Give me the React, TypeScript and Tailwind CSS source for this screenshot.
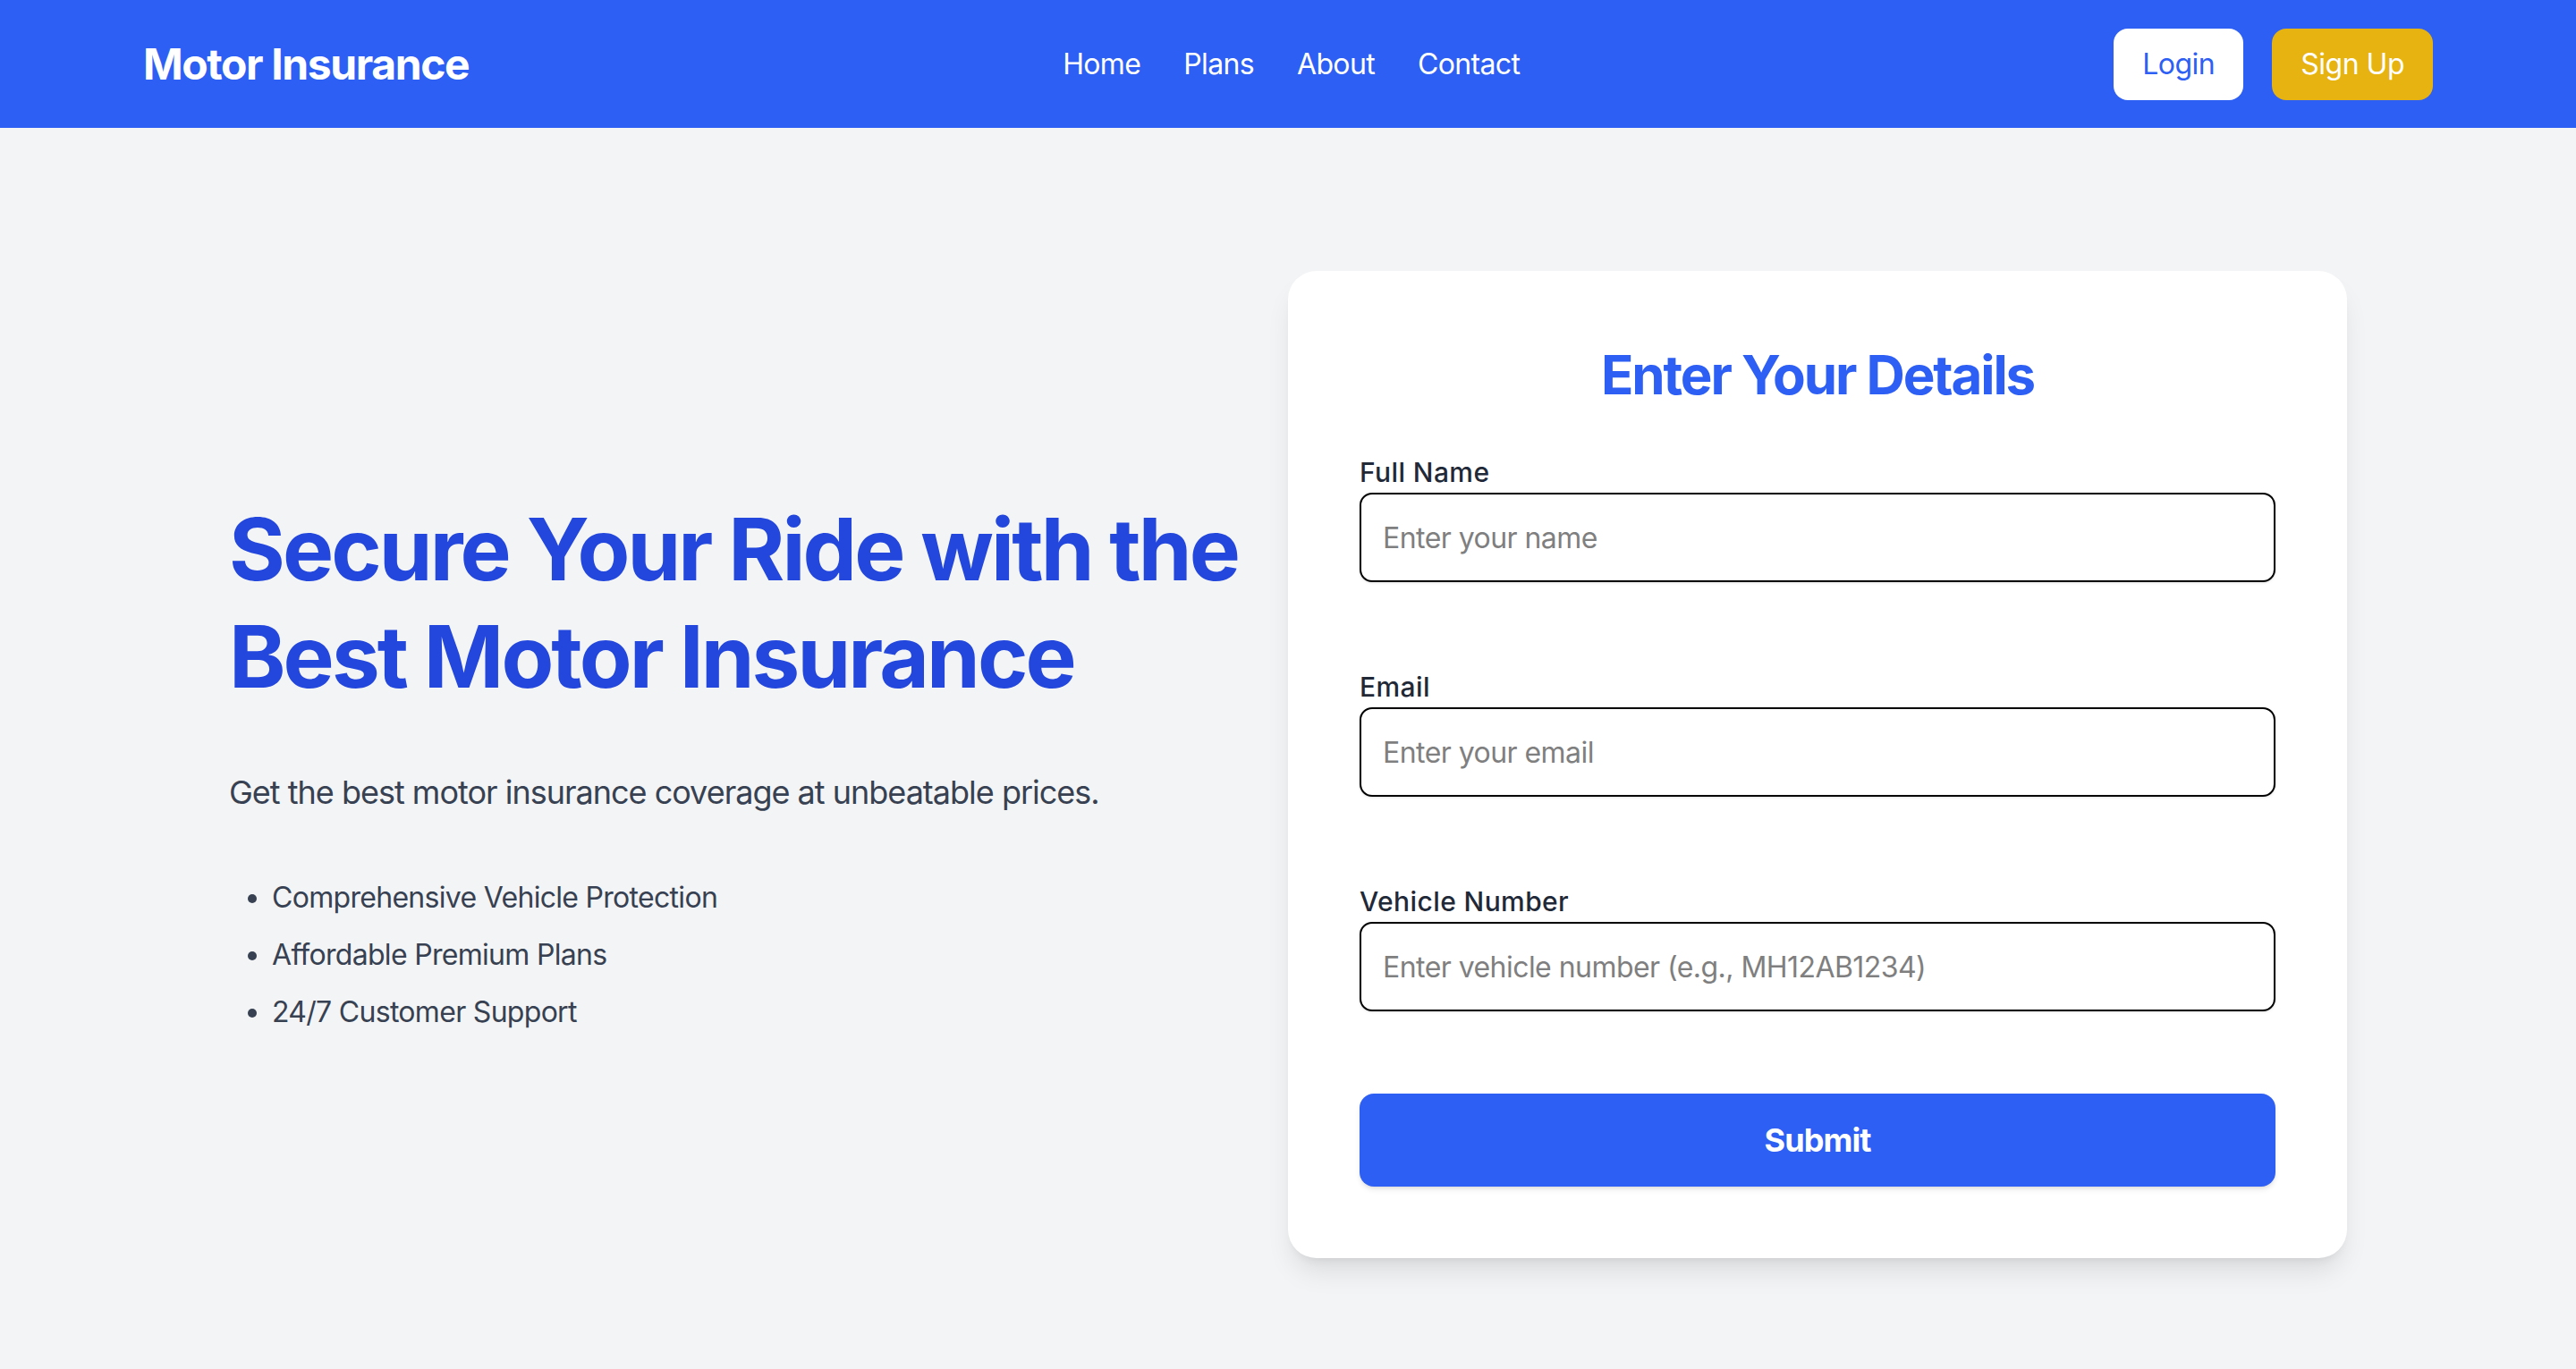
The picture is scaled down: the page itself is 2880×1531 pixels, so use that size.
import React from "react";

const navLinks = ["Home", "Plans", "About", "Contact"];
const perks = [
  "Comprehensive Vehicle Protection",
  "Affordable Premium Plans",
  "24/7 Customer Support",
];

const Field = ({ label, placeholder, type, last }: { label: string; placeholder: string; type: string; last?: boolean }) => {
  return (
    <div className={last ? "mb-[92px]" : "mb-[97px]"}>
      <label className="block text-[30px] leading-[40px] font-medium text-[#1f2937] mb-[3px] tracking-[0.4px]">{label}</label>
      <input
        type={type}
        placeholder={placeholder}
        className="block w-full h-[100px] px-[24px] border-2 border-black rounded-[14px] bg-white text-[32px] leading-[48px] tracking-[-0.55px] text-black placeholder:text-[#7f7f7f] shadow-sm outline-none"
      />
    </div>
  );
};

const App = () => {
  return (
    <div className="min-h-screen bg-[#f3f4f6] font-['Inter',sans-serif]">
      <nav className="h-[143px] bg-[#2e5ff4] px-[160px] flex items-center justify-between">
        <div className="text-[48px] leading-[64px] font-bold text-white tracking-[-1.4px]">Motor Insurance</div>
        <ul className="flex gap-[48px] text-[32px] leading-[48px] text-white tracking-[-0.65px]">
          {navLinks.map((l) => (
            <li key={l}>
              <a href="#">{l}</a>
            </li>
          ))}
        </ul>
        <div className="flex gap-[32px]">
          <button className="bg-white text-[#2e5ff4] px-[32px] py-[16px] rounded-[16px] text-[32px] leading-[48px] tracking-[-0.5px]">Login</button>
          <button className="bg-[#e6b310] text-white px-[32px] py-[16px] rounded-[16px] text-[32px] leading-[48px] tracking-[-0.5px]">Sign Up</button>
        </div>
      </nav>

      <main className="px-[256px] py-[160px] grid grid-cols-2 items-center">
        <div>
          <h1 className="text-[96px] leading-[120px] font-bold text-[#2347dc] tracking-[-2.9px]">
            Secure Your Ride with the Best Motor Insurance
          </h1>
          <p className="mt-[64px] text-[36px] leading-[56px] text-[#374151] tracking-[-1px]">
            Get the best motor insurance coverage at unbeatable prices.
          </p>
          <ul className="mt-[66px] list-disc pl-[48px] text-[32px] leading-[48px] text-[#374151] space-y-[16px] tracking-[-0.7px]">
            {perks.map((p) => (
              <li key={p}>{p}</li>
            ))}
          </ul>
        </div>

        <div className="bg-white rounded-[32px] p-[80px] shadow-[0_20px_30px_-6px_rgba(0,0,0,0.1),0_8px_12px_-8px_rgba(0,0,0,0.1)]">
          <h2 className="text-center text-[60px] leading-[72px] font-bold text-[#2e5ff4] mb-[53px] tracking-[-2.1px]">
            Enter Your Details
          </h2>
          <form>
            <Field label="Full Name" placeholder="Enter your name" type="text" />
            <Field label="Email" placeholder="Enter your email" type="email" />
            <Field label="Vehicle Number" placeholder="Enter vehicle number (e.g., MH12AB1234)" type="text" last />
            <button
              type="button"
              className="w-full h-[104px] bg-[#2e5ff4] text-white text-[36px] leading-[56px] font-bold rounded-[16px] shadow-md tracking-[-0.9px]"
            >
              Submit
            </button>
          </form>
        </div>
      </main>
    </div>
  );
};

export default App;
